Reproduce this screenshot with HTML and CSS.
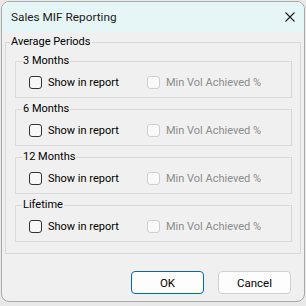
FILE: index.html
```html
<!DOCTYPE HTML>
<html>
<head>
<link rel="stylesheet" href="styles.css">
</head>
<body>
<div class="window">
  <div class="titlebar">
    <span class="title">Sales MIF Reporting</span>
    <svg class="close" width="10" height="10" viewBox="0 0 10 10">
      <path d="M0.5 0.5 L9.5 9.5 M9.5 0.5 L0.5 9.5" stroke="#1b1b1b" stroke-width="1.1" fill="none"/>
    </svg>
  </div>
  <div class="content">
    <fieldset class="outer">
      <legend>Average Periods</legend>

      <fieldset class="period">
        <legend>3 Months</legend>
        <div class="row">
          <label class="check"><span class="box"></span>Show in report</label>
          <label class="check disabled"><span class="box"></span>Min Vol Achieved %</label>
        </div>
      </fieldset>

      <fieldset class="period">
        <legend>6 Months</legend>
        <div class="row">
          <label class="check"><span class="box"></span>Show in report</label>
          <label class="check disabled"><span class="box"></span>Min Vol Achieved %</label>
        </div>
      </fieldset>

      <fieldset class="period">
        <legend>12 Months</legend>
        <div class="row">
          <label class="check"><span class="box"></span>Show in report</label>
          <label class="check disabled"><span class="box"></span>Min Vol Achieved %</label>
        </div>
      </fieldset>

      <fieldset class="period">
        <legend>Lifetime</legend>
        <div class="row">
          <label class="check"><span class="box"></span>Show in report</label>
          <label class="check disabled"><span class="box"></span>Min Vol Achieved %</label>
        </div>
      </fieldset>
    </fieldset>

    <div class="buttons">
      <button class="button default">OK</button>
      <button class="button">Cancel</button>
    </div>
  </div>
</div>
</body>
</html>
```

FILE: styles.css
```css
body {
  margin: 0;
  background-color: #e9e9e9;
  font-family: Roboto, "Liberation Sans", sans-serif;
  font-size: 11px;
  color: #000;
}
.window {
  margin: 1px 0 0 1px;
  width: 302px;
  height: 299px;
  border: 1px solid #a9a9a9;
  border-radius: 8px;
  overflow: hidden;
  background-color: #f0f0f0;
}
.titlebar {
  height: 30px;
  background-color: #e6f6f7;
  display: flex;
  align-items: center;
  justify-content: space-between;
  padding: 0 9px 0 9px;
}
.title {
  font-size: 11.8px;
  color: #1a1a1a;
}
.content {
  padding: 2px 3px 0 3px;
}
fieldset {
  margin: 0;
  min-width: 0;
  border: 1px solid #d9d9d9;
}
legend {
  padding: 0 1px;
  line-height: 16px;
  white-space: nowrap;
}
.outer {
  padding: 3px 8px 11px 9px;
}
.outer legend {
  margin-left: -5px;
}
.period {
  padding: 5px 8px 7px 13px;
  margin-bottom: 3px;
}
.period:last-child {
  margin-bottom: 0;
}
.period legend {
  margin-left: -7px;
}
.row {
  display: flex;
  height: 16px;
  align-items: center;
}
.check {
  display: flex;
  align-items: center;
  white-space: nowrap;
  width: 118px;
}
.check.disabled {
  width: auto;
}
.box {
  flex: none;
  width: 11px;
  height: 11px;
  border: 1px solid #333;
  border-radius: 3px;
  background-color: #f7f7f7;
  margin-right: 6px;
}
.disabled {
  color: #8c8c8c;
}
.disabled .box {
  border-color: #cfcfcf;
  background-color: #f9f9f9;
}
.buttons {
  display: flex;
  justify-content: flex-end;
  gap: 14px;
  padding: 17px 10px 0 0;
}
.button {
  width: 73px;
  height: 23px;
  border: 1px solid #d0d0d0;
  border-radius: 4px;
  background-color: #fdfdfd;
  font-family: inherit;
  font-size: 11.5px;
  color: #000;
  padding: 0;
}
.default {
  border-color: #0067c0;
}
```
